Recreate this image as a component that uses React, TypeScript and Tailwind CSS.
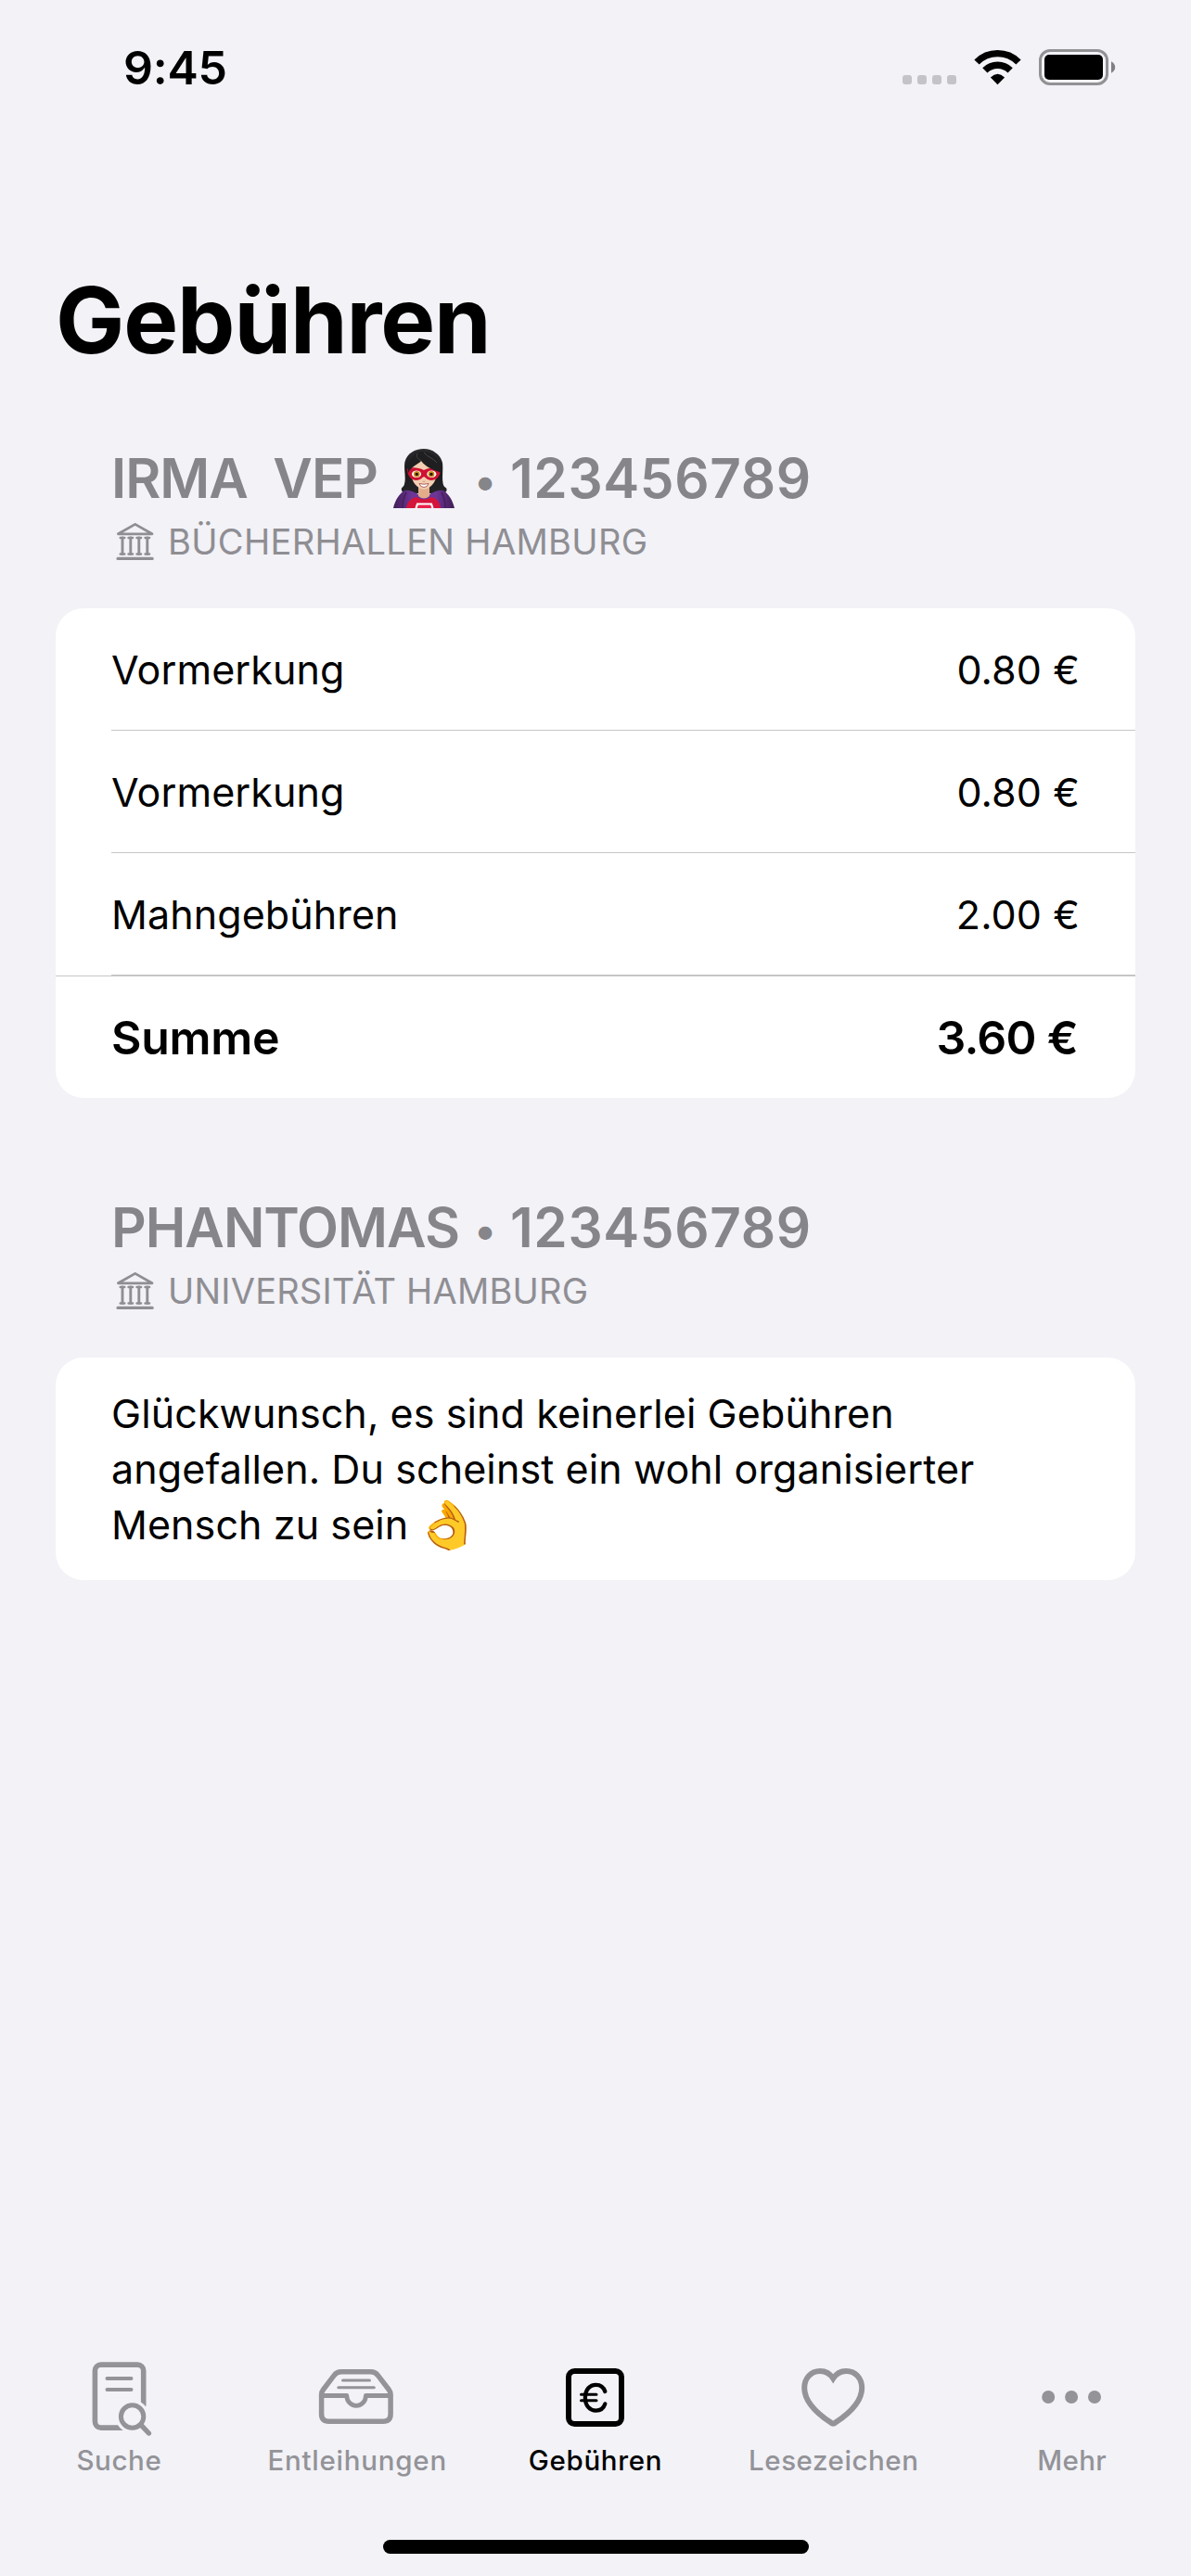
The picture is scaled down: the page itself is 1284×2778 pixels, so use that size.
import type { ReactNode } from 'react';

function StatusIcons() {
  return (
    <svg className="mt-[4px] h-[50px] w-[240px]" viewBox="0 0 240 50" fill="none">
      {[3, 19, 35, 51].map((x) => (
        <rect key={x} x={x} y="31" width="10" height="10" rx="3" fill="#c4c3c8" />
      ))}
      <path d="M83 17A31.8 31.8 0 0 1 128 17" stroke="#000" strokeWidth="7.4" />
      <path d="M91.85 25.85A19.3 19.3 0 0 1 119.15 25.85" stroke="#000" strokeWidth="7.4" />
      <path d="M97.9 33.4Q105.5 26 113.1 33.4L105.5 41.2Z" fill="#000" />
      <rect x="151.5" y="4.5" width="72" height="36" rx="10.5" stroke="#929294" strokeWidth="3" />
      <rect x="156" y="9" width="63" height="27" rx="5" fill="#000" />
      <path d="M228 16.2Q232.2 18.5 232.2 22.5Q232.2 26.5 228 28.8Z" fill="#808083" />
    </svg>
  );
}

function SuperheroIcon() {
  return (
    <svg role="img" aria-label="🦸🏻‍♀️" className="h-[64px] w-[66px]" viewBox="0 0 66 64">
      <defs>
        <linearGradient id="cape" x1="0" x2="1">
          <stop offset="0" stopColor="#3f1d55" />
          <stop offset="0.3" stopColor="#6d3596" />
          <stop offset="0.7" stopColor="#6d3596" />
          <stop offset="1" stopColor="#3f1d55" />
        </linearGradient>
        <linearGradient id="hair" x1="0" x2="0" y1="0" y2="1">
          <stop offset="0" stopColor="#2c2c2e" />
          <stop offset="0.5" stopColor="#1b1b1d" />
          <stop offset="1" stopColor="#242426" />
        </linearGradient>
      </defs>
      <path
        d="M33 0C42 0 51 6 53 15C54 22 52 32 54 39C56 43 58 41 57.5 45C56 49 48 49 44 48H21C16 49 10 48 9 45C8 41 11 42 12 38C14 31 11 22 12.5 14C15 5 23 0 33 0Z"
        fill="url(#hair)"
      />
      <path d="M0 64C2 55 7 48 12 45C17 44 23 46 33 53C43 46 49 44 54 45C59 48 64 55 66 64Z" fill="url(#cape)" />
      <path d="M14 47C11 52 10 58 10 64M52 47C55 52 56 58 56 64" stroke="#43205c" strokeWidth="1.5" fill="none" />
      <path d="M27 40H39V51Q33 56 27 51Z" fill="#e3ad8a" />
      <path d="M14 64C15 57 19 53.5 25 52Q33 57 41 52C47 53.5 50 57 51 64Z" fill="#d5143c" />
      <path d="M24.5 64L26 59.5H41L42.5 64" fill="#e9234b" stroke="#fff" strokeWidth="2.2" />
      <path d="M33 9C43 9 47.5 16 47 27C46 36.5 39.5 43.5 33 43.5C26.5 43.5 20 36.5 19 27C18.5 16 23 9 33 9Z" fill="#f3cfb3" />
      <path d="M15 21.5C20 19.5 27 20 33 23C39 20 46 19.5 51 21.5C51 29 47 34 41 34C37 34 35 31 33 30C31 31 29 34 25 34C19 34 15 29 15 21.5Z" fill="#cf1232" />
      <ellipse cx="25" cy="27.3" rx="5" ry="3.8" fill="#fff" />
      <ellipse cx="41.3" cy="27.3" rx="5" ry="3.8" fill="#fff" />
      <circle cx="25.3" cy="27.3" r="3.3" fill="#c88a1c" />
      <circle cx="41" cy="27.3" r="3.3" fill="#c88a1c" />
      <circle cx="25.3" cy="27.3" r="1.6" fill="#241608" />
      <circle cx="41" cy="27.3" r="1.6" fill="#241608" />
      <path d="M28 37.5Q33 39 38 37.5Q37 41.5 33 41.5Q29 41.5 28 37.5Z" fill="#fff" stroke="#a6524a" strokeWidth="0.9" />
      <path d="M31.5 35Q33 36 34.5 35" stroke="#d99a78" strokeWidth="1" fill="none" />
      <path d="M16 26C15 14 20 6 29 3C41 2 51 8 52 26C44 23 35 20 30 13C27 17 20 18 16 26Z" fill="#1f1f21" />
      <path d="M26 5C24 9 27 11 30 13M33 4C37 9 43 10 47 15" stroke="#47474b" strokeWidth="1" fill="none" />
    </svg>
  );
}

function LibraryIcon() {
  return (
    <svg className="h-[42px] w-[42px]" viewBox="0 0 42 42" fill="none" stroke="#8f8e93" strokeLinecap="round" strokeLinejoin="round">
      <path d="M2.4 12.8L20.7 2.4L39 12.8Z" strokeWidth="2.8" />
      {[7, 15.8, 24.8, 33.8].map((x) => (
        <g key={x}>
          <path d={`M${x} 17V34.500`} strokeWidth="2.9" />
          <path d={`M${x - 2.3} 17h4.6M${x - 2.3} 34.500h4.6`} strokeWidth="2.4" />
        </g>
      ))}
      <path d="M2 39.4H39.2" strokeWidth="3.1" />
    </svg>
  );
}

function SearchDocIcon() {
  return (
    <svg className="h-[90px] w-[120px]" viewBox="0 0 120 90" fill="none" stroke="currentColor" strokeLinecap="round">
      <rect x="34.4" y="10.1" width="52.3" height="68" rx="6.5" strokeWidth="5.6" />
      <path d="M47.5 25H73.5M47.5 37H73.5" strokeWidth="4" />
      <circle cx="74.6" cy="66" r="18" fill="#f2f2f7" stroke="none" />
      <path d="M62 84H100V60L92 52Z" fill="#f2f2f7" stroke="none" />
      <circle cx="74.6" cy="66" r="12.2" strokeWidth="5" />
      <path d="M84 75.2L92.4 84" strokeWidth="5.4" />
    </svg>
  );
}

function TrayIcon() {
  return (
    <svg className="h-[90px] w-[120px]" viewBox="0 0 120 90" fill="none" stroke="currentColor" strokeLinecap="round" strokeLinejoin="round">
      <path
        d="M21.6 42.5Q21.6 39.5 23.5 37L35 21.8Q38 17.8 43 17.8H74.6Q79.6 17.8 82.6 21.8L94.2 37Q96.1 39.5 96.1 42.5V63.2Q96.1 71.2 88.1 71.2H29.6Q21.6 71.2 21.6 63.2Z"
        strokeWidth="5.5"
      />
      <path d="M21.6 43.5H48.8A10.3 10.9 0 0 0 69.4 43.5H96" strokeWidth="4.8" />
      <path d="M44.5 27H73.5M39.8 34.7H78.3" strokeWidth="3" />
    </svg>
  );
}

function EuroIcon() {
  return (
    <svg className="h-[90px] w-[120px]" viewBox="0 0 120 90" fill="none" stroke="currentColor" strokeLinecap="round">
      <rect x="31" y="17" width="57" height="57" rx="6.5" strokeWidth="6" />
      <path
        d="M70.3 39C68.8 34.3 65.3 31.8 60.5 31.8C53.8 31.8 48.9 37 48.9 45.7C48.9 54.4 53.8 59.6 60.5 59.6C65.3 59.6 68.8 57.1 70.3 52.4"
        strokeWidth="4.3"
      />
      <path d="M44.5 42.3H61M44.5 48.7H61" strokeWidth="3" />
    </svg>
  );
}

function HeartIcon() {
  return (
    <svg className="h-[90px] w-[120px]" viewBox="0 0 120 90" fill="none" stroke="currentColor">
      <path
        d="M59.2 25C56 20 51 17 45.2 17C35 17 28.2 24.8 28.2 35.2C28.2 49 41.5 62.5 56.8 72.6Q59.2 74.6 61.6 72.6C76.9 62.5 90.2 49 90.2 35.2C90.2 24.8 83.4 17 73.2 17C67.4 17 62.4 20 59.2 25Z"
        strokeWidth="6"
      />
    </svg>
  );
}

function MoreIcon() {
  return (
    <svg className="h-[90px] w-[120px]" viewBox="0 0 120 90" fill="currentColor">
      <circle cx="34.2" cy="45" r="7" />
      <circle cx="59.1" cy="45" r="7" />
      <circle cx="84" cy="45" r="7" />
    </svg>
  );
}

function AccountHeader({ name, emoji, number, library }: { name: string; emoji?: ReactNode; number: string; library: ReactNode }) {
  return (
    <div className="px-[60px]">
      <h2 className="flex h-[72px] items-center text-[58.5px] leading-[72px] font-semibold text-[#868589]">
        <span className="flex w-[388px] shrink-0 items-center justify-between pr-[18px] tracking-[-1px] whitespace-pre">
          <span>{name}</span>
          {emoji}
        </span>
        <span className="flex w-[30px] justify-center pt-[3px] text-[46px]">•</span>
        <span className="ml-[12px] tracking-[0.6px]">{number}</span>
      </h2>
      <div className="mt-[7px] flex h-[50px] items-center gap-[14px] pl-[5px] text-[38px] leading-[50px] text-[#8f8e93]">
        <LibraryIcon />
        {library}
      </div>
    </div>
  );
}

const fees = [
  { label: 'Vormerkung', amount: '0.80 €' },
  { label: 'Vormerkung', amount: '0.80 €' },
  { label: 'Mahngebühren', amount: '2.00 €' },
];

const tabs = [
  { label: 'Suche', icon: <SearchDocIcon />, tone: 'text-[#939398] tracking-[0.6px]' },
  { label: 'Entleihungen', icon: <TrayIcon />, tone: 'text-[#939398] tracking-[0.75px]' },
  { label: 'Gebühren', icon: <EuroIcon />, tone: 'text-black tracking-[0.7px]' },
  { label: 'Lesezeichen', icon: <HeartIcon />, tone: 'text-[#939398] tracking-[0.55px]' },
  { label: 'Mehr', icon: <MoreIcon />, tone: 'text-[#939398] tracking-[0.3px]' },
];

export default function App() {
  return (
    <div className="flex h-[2778px] w-[1284px] flex-col overflow-hidden bg-[#f2f2f7] font-[Inter,sans-serif] text-black">
      <header className="flex h-[146px] shrink-0 items-center justify-between pr-[74px] pl-[133px]">
        <span className="text-[50px] leading-none font-semibold tracking-[-0.24px]">9:45</span>
        <StatusIcons />
      </header>

      <main className="flex-1 px-[60px] pt-[139px]">
        <h1 className="text-[99px] leading-[120px] font-bold tracking-[-1.1px]">Gebühren</h1>

        <section className="mt-[75px]">
          <AccountHeader
            name="IRMA  VEP"
            emoji={<SuperheroIcon />}
            number="123456789"
            library={<span className="tracking-[0.33px]">BÜCHERHALLEN HAMBURG</span>}
          />
          <div className="mt-[47px] h-[528px] overflow-hidden rounded-[30px] bg-white">
            {fees.map((fee, i) => (
              <div key={i} className="ml-[60px] flex h-[132px] items-center justify-between border-b border-[#c6c6c8] pt-px pr-[60px] text-[43px] tracking-[0.1px]">
                <span>{fee.label}</span>
                <span>{fee.amount}</span>
              </div>
            ))}
            <div className="flex h-[132px] items-center justify-between border-t border-[#c6c6c8] pt-px pr-[62px] pl-[60px] text-[50px] font-semibold">
              <span className="tracking-[-0.3px]">Summe</span>
              <span className="tracking-[-0.7px]">3.60 €</span>
            </div>
          </div>
        </section>

        <section className="mt-[104px]">
          <AccountHeader
            name="PHANTOMAS"
            number="123456789"
            library={<span className="tracking-[0.2px]">UNIVERSITÄT HAMBURG</span>}
          />
          <div className="mt-[47px] h-[240px] rounded-[30px] bg-white px-[60px] pt-[30px]">
            <p className="text-[43px] leading-[60px] tracking-[0.1px] whitespace-nowrap">
              Glückwunsch, es sind keinerlei Gebühren
              <br />
              angefallen. Du scheinst ein wohl organisierter
              <br />
              Mensch zu sein{' '}
              <span className="-ml-[11px] inline-block h-[60px] origin-left scale-x-[1.28] align-top text-[51px] tracking-normal">👌</span>
            </p>
          </div>
        </section>
      </main>

      <nav className="grid h-[199px] shrink-0 grid-cols-5">
        {tabs.map((tab) => (
          <div key={tab.label} className={`flex flex-col items-center text-[29.5px] leading-[36px] font-medium ${tab.tone}`}>
            {tab.icon}
            <span className="mt-[5px]">{tab.label}</span>
          </div>
        ))}
      </nav>
      <div className="mb-[24px] ml-[413px] h-[15px] w-[459px] shrink-0 rounded-full bg-black" />
    </div>
  );
}
